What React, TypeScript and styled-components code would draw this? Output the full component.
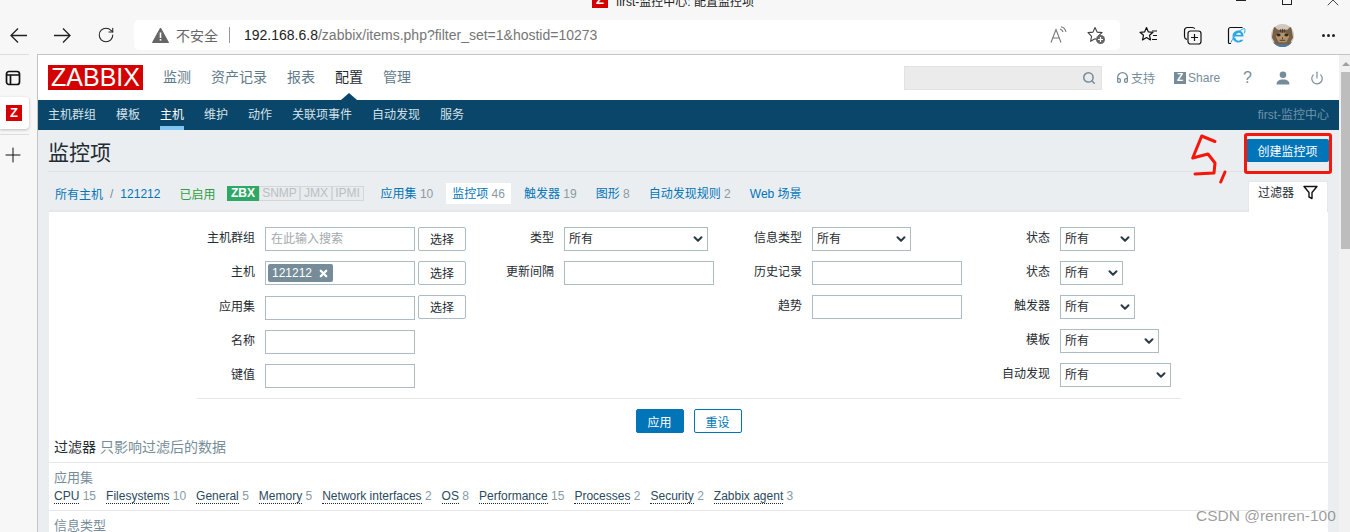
import { FC, ReactNode } from 'react';
import styled, { createGlobalStyle } from 'styled-components';
import { ChevronDown, Headphones, Plus, Power, RotateCw, Search, X } from 'lucide-react';

const FONT = `"Liberation Sans", "Noto Sans CJK SC", sans-serif`;

const palette = {
    link: '#0275b8',
    text: '#1f2c33',
    gray: '#768d99',
    count: '#8a9aa5',
    navy: '#0a466a',
    page: '#ebeef0',
    line: '#e4e7e9',
    border: '#acbbc4',
};

const GlobalStyle = createGlobalStyle`
    html, body {
        margin: 0;
        padding: 0;
        overflow: hidden;
    }
    body {
        font-family: ${FONT};
        font-size: 12px;
        color: ${palette.text};
    }
`;

const subMenu = ['主机群组', '模板', '主机', '维护', '动作', '关联项事件', '自动发现', '服务'];
const topMenu = ['监测', '资产记录', '报表', '配置', '管理'];
const apps: [string, number][] = [
    ['CPU', 15],
    ['Filesystems', 10],
    ['General', 5],
    ['Memory', 5],
    ['Network interfaces', 2],
    ['OS', 8],
    ['Performance', 15],
    ['Processes', 2],
    ['Security', 2],
    ['Zabbix agent', 3],
];

const Field: FC<{ label: string; labelWidth: number; tall?: boolean; children: ReactNode }> = ({ label, labelWidth, tall, children }) => (
    <FieldRow $labelWidth={labelWidth} $tall={tall}>
        <FieldLabel>{label}</FieldLabel>
        <Control>{children}</Control>
    </FieldRow>
);

const AllSelect: FC<{ width: number }> = ({ width }) => (
    <SelectWrap $width={width}>
        <SelectBox defaultValue="all">
            <option value="all">所有</option>
        </SelectBox>
        <SelectArrow>
            <ChevronDown size={14} strokeWidth={3.4} />
        </SelectArrow>
    </SelectWrap>
);

const App: FC = () => {
    return (
        <Window>
            <GlobalStyle />
            <TitleBar>
                <TitleInner>
                    <TitleIcon>Z</TitleIcon>
                    <span>first-监控中心: 配置监控项</span>
                </TitleInner>
                <WindowButtons>
                    <MinLine />
                    <MaxBox />
                    <CloseMark>
                        <X size={20} strokeWidth={1} />
                    </CloseMark>
                </WindowButtons>
            </TitleBar>

            <Toolbar>
                <IconSlot>
                    <svg width="19" height="19" viewBox="0 0 19 19" fill="none" stroke="#222" strokeWidth="1.3">
                        <path d="M2 9.5h16M9 2.5l-7 7 7 7" />
                    </svg>
                </IconSlot>
                <IconSlot>
                    <svg width="19" height="19" viewBox="0 0 19 19" fill="none" stroke="#222" strokeWidth="1.3">
                        <path d="M1 9.5h16M10 2.5l7 7-7 7" />
                    </svg>
                </IconSlot>
                <IconSlot>
                    <RotateCw size={18} strokeWidth={1.4} color="#222" />
                </IconSlot>
                <AddressBar>
                    <svg width="17" height="16" viewBox="0 0 17 16">
                        <path d="M8.5 1L16.5 15.5H.5z" fill="#666" stroke="#666" strokeLinejoin="round" />
                        <rect x="7.7" y="5.5" width="1.6" height="5.5" fill="#fff" />
                        <rect x="7.7" y="12" width="1.6" height="1.6" fill="#fff" />
                    </svg>
                    <Insecure>不安全</Insecure>
                    <AddressDivider />
                    <Url>
                        192.168.6.8<UrlPath>/zabbix/items.php?filter_set=1&amp;hostid=10273</UrlPath>
                    </Url>
                    <AddressTools>
                        <svg width="18" height="18" viewBox="0 0 18 18" fill="none" stroke="#777" strokeWidth="1.1">
                            <path d="M1 16.500L6 3.500l5 13M2.800 12h6.400" />
                            <path d="M10 3c1.500.4 2.600 1.500 3 3M11 .8c2.600.6 4.300 2.400 5 5" />
                        </svg>
                        <svg width="19" height="19" viewBox="0 0 19 19">
                            <path d="M8 1.500l2.100 4.600 5 .5-3.700 3.300 1 4.900L8 12.800l-4.400 2.500 1-4.900L1 6.600l5-.5z" fill="none" stroke="#444" strokeWidth="1.1" strokeLinejoin="round" />
                            <circle cx="13.500" cy="13.500" r="4.500" fill="#666" />
                            <path d="M13.500 11v5M11 13.500h5" stroke="#fff" strokeWidth="1.2" />
                        </svg>
                    </AddressTools>
                </AddressBar>
                <IconSlot>
                    <svg width="19" height="19" viewBox="0 0 19 19" fill="none" stroke="#111" strokeWidth="1.2" strokeLinejoin="round">
                        <path d="M7.500 1.500l1.900 4.400 4.600.4-3.500 3 1 4.600-4-2.400-4 2.400 1-4.600L1 6.300l4.600-.4z" />
                        <path d="M13 5h5M14 9.500h4M13 13.500h5" />
                    </svg>
                </IconSlot>
                <IconSlot>
                    <svg width="19" height="19" viewBox="0 0 19 19" fill="none" stroke="#111" strokeWidth="1.2">
                        <path d="M4 13.500C2.500 13 1.500 12 1.500 10.500V4.500c0-1.700 1.300-3 3-3h5c1 0 1.800.5 2.300 1.300" />
                        <rect x="5" y="5" width="13" height="13" rx="2.500" />
                        <path d="M11.500 8v7M8 11.500h7" />
                    </svg>
                </IconSlot>
                <IconSlot>
                    <svg width="19" height="19" viewBox="0 0 19 19" fill="none">
                        <path d="M4 17.500H2.500c-.6 0-1-.4-1-1v-13c0-1.100.9-2 2-2h12" stroke="#111" strokeWidth="1.200" />
                        <path d="M6 10.500h10.500C16.500 7 14.500 4.500 11.500 4.500 8 4.500 5.500 7 5.500 10.500s2.500 6 6 6c2.200 0 3.800-1 4.800-2.800h-2.800c-.5.700-1.200 1-2 1-1.600 0-2.700-1-2.900-2.400" fill="#2aa7e8" />
                        <path d="M8.800 8.800c.2-1.200 1.300-2.100 2.700-2.100s2.400.9 2.600 2.100z" fill="#fff" />
                        <path d="M4 16.500C7 9 13 3.500 17.500 2.500c.8 1.200.5 3-.5 5" stroke="#2aa7e8" strokeWidth="1" />
                    </svg>
                </IconSlot>
                <AvatarSlot>
                    <svg width="23" height="23" viewBox="0 0 24 24">
                        <clipPath id="avatar-clip">
                            <circle cx="12" cy="12" r="12" />
                        </clipPath>
                        <g clipPath="url(#avatar-clip)">
                            <rect width="24" height="24" fill="#cfc9c0" />
                            <rect y="19" width="24" height="5" fill="#4f77a3" />
                            <path d="M3 2l4 4h10l4-4 2 12-4 7H5l-4-7z" fill="#7a5f45" />
                            <path d="M8 9h8l3 4-3 6H8l-3-6z" fill="#b0946e" />
                            <ellipse cx="8" cy="11.500" rx="2" ry="1.500" fill="#2e2a22" />
                            <ellipse cx="16" cy="11.500" rx="2" ry="1.500" fill="#2e2a22" />
                            <path d="M12 14v2M9 17h6" stroke="#4d3a28" strokeWidth="1" />
                            <path d="M10 5.500v3M12 5V9M14 5.500v3" stroke="#3d2d1f" strokeWidth=".8" />
                        </g>
                    </svg>
                </AvatarSlot>
                <DotsSlot>
                    <Dot />
                    <Dot />
                    <Dot />
                </DotsSlot>
            </Toolbar>

            <Body>
                <Sidebar>
                    <SideRule />
                    <SideIcon>
                        <svg width="16" height="16" viewBox="0 0 16 16" fill="none" stroke="#111" strokeWidth="1.700">
                            <rect x="1.500" y="1.500" width="13" height="13" rx="2.500" />
                            <path d="M1.500 5h13M5.500 5v9.500" />
                        </svg>
                    </SideIcon>
                    <SideTab>
                        <SideFavicon>Z</SideFavicon>
                    </SideTab>
                    <SideRule $offset={5} />
                    <AddTabIcon>
                        <Plus size={24} strokeWidth={1} color="#111" />
                    </AddTabIcon>
                </Sidebar>

                <Main>
                    <Header>
                        <Logo>ZABBIX</Logo>
                        <TopNav>
                            {topMenu.map(item => (
                                <TopItem key={item} $active={item === '配置'}>
                                    {item}
                                </TopItem>
                            ))}
                        </TopNav>
                        <HeaderTools>
                            <SearchBox>
                                <Search size={14} strokeWidth={2.6} color={palette.gray} />
                            </SearchBox>
                            <HeaderLink $gap={16}>
                                <Headphones size={13} strokeWidth={2.4} />
                                支持
                            </HeaderLink>
                            <HeaderLink $gap={19}>
                                <ShareBox>Z</ShareBox>
                                Share
                            </HeaderLink>
                            <HelpMark>?</HelpMark>
                            <HeaderLink $gap={24}>
                                <svg width="14" height="14" viewBox="0 0 14 14" fill={palette.gray}>
                                    <circle cx="7" cy="3.800" r="3.300" />
                                    <path d="M0.500 13.500c0-3 2-5 6.500-5s6.500 2 6.500 5z" />
                                </svg>
                            </HeaderLink>
                            <HeaderLink $gap={20}>
                                <Power size={14} strokeWidth={2} />
                            </HeaderLink>
                        </HeaderTools>
                    </Header>

                    <SubNav>
                        {subMenu.map(item => (
                            <SubItem key={item} $active={item === '主机'}>
                                {item}
                            </SubItem>
                        ))}
                        <ServerName>first-监控中心</ServerName>
                    </SubNav>

                    <PageHead>
                        <PageTitle>监控项</PageTitle>
                        <CreateButton>创建监控项</CreateButton>
                    </PageHead>

                    <Content>
                        <TabsRow>
                            <Crumbs>
                                <Link>所有主机</Link>
                                <Slash>/</Slash>
                                <Link>121212</Link>
                                <Enabled>已启用</Enabled>
                                <Availability>
                                    <Avail $on>ZBX</Avail>
                                    <Avail>SNMP</Avail>
                                    <Avail>JMX</Avail>
                                    <Avail>IPMI</Avail>
                                </Availability>
                                <HostTabs>
                                    <HostTab>
                                        <Link>应用集</Link> <Count>10</Count>
                                    </HostTab>
                                    <HostTab $active>
                                        <Link>监控项</Link> <Count>46</Count>
                                    </HostTab>
                                    <HostTab>
                                        <Link>触发器</Link> <Count>19</Count>
                                    </HostTab>
                                    <HostTab>
                                        <Link>图形</Link> <Count>8</Count>
                                    </HostTab>
                                    <HostTab>
                                        <Link>自动发现规则</Link> <Count>2</Count>
                                    </HostTab>
                                    <HostTab>
                                        <Link>Web 场景</Link>
                                    </HostTab>
                                </HostTabs>
                            </Crumbs>
                            <FilterTab>
                                过滤器
                                <svg width="15" height="15" viewBox="0 0 15 15" fill="none" stroke="#111" strokeWidth="1.400" strokeLinejoin="round">
                                    <path d="M1 1.500h13L9 7.500v6l-3-1.500V7.500z" />
                                </svg>
                            </FilterTab>
                        </TabsRow>

                        <FilterPanel>
                            <FormGrid>
                                <FormColumn>
                                    <Field label="主机群组" labelWidth={58}>
                                        <TextInput $width={150} placeholder="在此输入搜索" />
                                        <PickButton>选择</PickButton>
                                    </Field>
                                    <Field label="主机" labelWidth={58} tall>
                                        <ChipInput>
                                            <Chip>
                                                121212
                                                <X size={11} strokeWidth={5} />
                                            </Chip>
                                        </ChipInput>
                                        <PickButton>选择</PickButton>
                                    </Field>
                                    <Field label="应用集" labelWidth={58}>
                                        <TextInput $width={150} />
                                        <PickButton $raised>选择</PickButton>
                                    </Field>
                                    <Field label="名称" labelWidth={58}>
                                        <TextInput $width={150} />
                                    </Field>
                                    <Field label="键值" labelWidth={58}>
                                        <TextInput $width={150} />
                                    </Field>
                                </FormColumn>
                                <FormColumn>
                                    <Field label="类型" labelWidth={70}>
                                        <AllSelect width={144} />
                                    </Field>
                                    <Field label="更新间隔" labelWidth={70}>
                                        <TextInput $width={150} />
                                    </Field>
                                </FormColumn>
                                <FormColumn>
                                    <Field label="信息类型" labelWidth={78}>
                                        <AllSelect width={99} />
                                    </Field>
                                    <Field label="历史记录" labelWidth={78}>
                                        <TextInput $width={150} />
                                    </Field>
                                    <Field label="趋势" labelWidth={78}>
                                        <TextInput $width={150} />
                                    </Field>
                                </FormColumn>
                                <FormColumn>
                                    <Field label="状态" labelWidth={78}>
                                        <AllSelect width={75} />
                                    </Field>
                                    <Field label="状态" labelWidth={78}>
                                        <AllSelect width={63} />
                                    </Field>
                                    <Field label="触发器" labelWidth={78}>
                                        <AllSelect width={75} />
                                    </Field>
                                    <Field label="模板" labelWidth={78}>
                                        <AllSelect width={99} />
                                    </Field>
                                    <Field label="自动发现" labelWidth={78}>
                                        <AllSelect width={111} />
                                    </Field>
                                </FormColumn>
                            </FormGrid>
                            <FormActions>
                                <ApplyButton>应用</ApplyButton>
                                <ResetButton>重设</ResetButton>
                            </FormActions>
                            <FilterNote>
                                过滤器 <NoteGray>只影响过滤后的数据</NoteGray>
                            </FilterNote>
                            <Subfilter>
                                <SubfilterTitle>应用集</SubfilterTitle>
                                <TagList>
                                    {apps.map(([name, count]) => (
                                        <TagItem key={name}>
                                            <TagName>{name}</TagName> <Count>{count}</Count>
                                        </TagItem>
                                    ))}
                                </TagList>
                            </Subfilter>
                            <Subfilter>
                                <SubfilterTitle>信息类型</SubfilterTitle>
                            </Subfilter>
                        </FilterPanel>
                    </Content>
                </Main>

                <ScrollBar>
                    <ScrollArrow />
                    <ScrollThumb />
                </ScrollBar>
            </Body>

            <RedFrame />
            <Scribble width="44" height="54" viewBox="0 0 44 54" fill="none" stroke="#f5160c" strokeWidth="3" strokeLinecap="round" strokeLinejoin="round">
                <path d="M13.700 5l13.300 5.500M13.700 5L4.700 27l15.300-4 7 9-1 10-19 1" />
                <path d="M37 41l-4.300 10" />
            </Scribble>
            <Watermark>CSDN @renren-100</Watermark>
        </Window>
    );
};

const Window = styled.div`
    position: relative;
    width: 1350px;
    height: 532px;
    overflow: hidden;
    background-color: #f7f7f7;
    display: flex;
    flex-direction: column;
`;

const TitleBar = styled.div`
    height: 20px;
    flex: none;
    overflow: hidden;
    display: flex;
`;

const TitleInner = styled.div`
    height: 16px;
    margin: -8px 0 0 592px;
    display: flex;
    align-items: center;
    gap: 8px;
    font-size: 12px;
    color: #222;
`;

const TitleIcon = styled.span`
    width: 16px;
    height: 16px;
    background-color: #d40000;
    color: #fff;
    font-weight: bold;
    font-size: 13px;
    text-align: center;
    line-height: 16px;
`;

const WindowButtons = styled.div`
    margin-left: auto;
    display: flex;
    align-items: flex-start;
    padding-right: 7px;
`;

const MinLine = styled.div`
    width: 10px;
    height: 1px;
    background-color: #222;
`;

const MaxBox = styled.div`
    width: 10px;
    height: 5px;
    box-sizing: border-box;
    margin: 0 31px 0 36px;
    border: 1px solid #222;
    border-top: none;
`;

const CloseMark = styled.div`
    margin-top: -10px;
    color: #222;
`;

const Toolbar = styled.div`
    height: 34px;
    flex: none;
    display: flex;
    align-items: flex-start;
    gap: 8px;
`;

const IconSlot = styled.div`
    width: 36px;
    height: 30px;
    flex: none;
    display: flex;
    align-items: center;
    justify-content: center;
`;

const AvatarSlot = styled(IconSlot)`
    margin-left: 2px;
`;

const DotsSlot = styled(IconSlot)`
    gap: 2px;
    margin-left: 2px;
`;

const Dot = styled.span`
    width: 3px;
    height: 3px;
    border-radius: 50%;
    background-color: #222;
`;

const AddressBar = styled.div`
    width: 986px;
    height: 30px;
    margin: 0 2px;
    padding: 0 14px 0 18px;
    box-sizing: border-box;
    flex: none;
    display: flex;
    align-items: center;
    background-color: #fff;
    border-radius: 5px;
`;

const Insecure = styled.span`
    margin-left: 7px;
    font-size: 14px;
    color: #666;
`;

const AddressDivider = styled.span`
    width: 1px;
    height: 16px;
    margin: 0 14px 0 11px;
    background-color: #999;
`;

const Url = styled.span`
    font-size: 14px;
    color: #222;
`;

const UrlPath = styled.span`
    color: #767676;
`;

const AddressTools = styled.div`
    margin-left: auto;
    display: flex;
    align-items: center;
    gap: 19px;
`;

const Body = styled.div`
    flex: 1;
    min-height: 0;
    display: flex;
`;

const Sidebar = styled.div`
    width: 37px;
    flex: none;
    display: flex;
    flex-direction: column;
    align-items: flex-start;
`;

const SideIcon = styled.div`
    width: 26px;
    height: 42px;
    box-sizing: border-box;
    padding-top: 4px;
    display: flex;
    align-items: center;
    justify-content: center;
`;

const AddTabIcon = styled(SideIcon)`
    padding: 0 0 2px;
`;

const SideRule = styled.div<{ $offset?: number }>`
    width: 29px;
    height: 1px;
    flex: none;
    margin-top: ${p => p.$offset ?? 0}px;
    background-color: #dcdcdc;
`;

const SideTab = styled.div`
    width: 29px;
    height: 32px;
    padding-left: 6px;
    box-sizing: border-box;
    display: flex;
    align-items: center;
    background-color: #fff;
    border-radius: 0 4px 4px 0;
    box-shadow: 0 1px 3px rgba(0, 0, 0, 0.25);
`;

const SideFavicon = styled.span`
    width: 16px;
    height: 16px;
    background-color: #d40000;
    color: #fff;
    font-size: 13px;
    font-weight: bold;
    line-height: 16px;
    text-align: center;
`;

const Main = styled.div`
    flex: 1;
    min-width: 0;
    display: flex;
    flex-direction: column;
    background-color: ${palette.page};
    border-top: 1px solid #c4c4c4;
    border-left: 1px solid #c4c4c4;
`;

const Header = styled.div`
    height: 45px;
    flex: none;
    display: flex;
    align-items: center;
    padding: 0 15px 0 10px;
    background-color: #fff;
`;

const Logo = styled.div`
    width: 95px;
    height: 25px;
    background-color: #d40000;
    color: #fff;
    font-size: 25px;
    line-height: 25px;
    text-align: center;
    flex: none;
`;

const TopNav = styled.div`
    display: flex;
    gap: 20px;
    margin: 0 0 3px 20px;
`;

const TopItem = styled.div<{ $active?: boolean }>`
    position: relative;
    font-size: 14px;
    color: ${p => (p.$active ? palette.text : '#5f7a8a')};

    ${p =>
        p.$active &&
        `&::after {
            content: '';
            position: absolute;
            left: 6px;
            bottom: -14px;
            border-left: 8px solid transparent;
            border-right: 8px solid transparent;
            border-bottom: 7px solid ${palette.navy};
        }`}
`;

const HeaderTools = styled.div`
    margin-left: auto;
    display: flex;
    align-items: center;
`;

const SearchBox = styled.div`
    width: 198px;
    height: 24px;
    margin-right: -2px;
    box-sizing: border-box;
    padding-right: 5px;
    display: flex;
    align-items: center;
    justify-content: flex-end;
    background-color: #ebebeb;
    border: 1px solid #e2e2e2;
`;

const HeaderLink = styled.div<{ $gap: number }>`
    margin-left: ${p => p.$gap}px;
    display: flex;
    align-items: center;
    gap: 2px;
    color: ${palette.gray};
`;

const ShareBox = styled.span`
    width: 12px;
    height: 12px;
    background-color: ${palette.gray};
    color: #fff;
    font-size: 10px;
    font-weight: bold;
    line-height: 12px;
    text-align: center;
`;

const HelpMark = styled.span`
    margin-left: 23px;
    font-size: 16px;
    color: ${palette.gray};
`;

const SubNav = styled.div`
    height: 30px;
    flex: none;
    display: flex;
    align-items: stretch;
    gap: 20px;
    padding: 0 10px;
    background-color: ${palette.navy};
`;

const SubItem = styled.div<{ $active?: boolean }>`
    line-height: 30px;
    color: ${p => (p.$active ? '#fff' : '#d4e1e8')};
    box-shadow: ${p => (p.$active ? 'inset 0 -4px 0 #7fc6f0' : 'none')};
`;

const ServerName = styled.div`
    margin-left: auto;
    line-height: 30px;
    color: #6d93a8;
`;

const PageHead = styled.div`
    height: 42px;
    box-sizing: border-box;
    flex: none;
    margin: 0 10px;
    display: flex;
    align-items: center;
    justify-content: space-between;
    border-bottom: 1px solid #dfe3e6;
`;

const PageTitle = styled.h1`
    margin: 0;
    font-size: 21px;
    font-weight: normal;
    color: ${palette.text};
`;

const CreateButton = styled.button`
    width: 83px;
    height: 23px;
    padding: 0;
    border: none;
    border-radius: 2px;
    background-color: ${palette.link};
    color: #fff;
    font: 12px ${FONT};
`;

const Content = styled.div`
    flex: 1;
    padding: 0 11px;
`;

const TabsRow = styled.div`
    height: 38px;
    display: flex;
    justify-content: space-between;
    align-items: flex-end;
`;

const Crumbs = styled.div`
    height: 100%;
    box-sizing: border-box;
    padding: 5px 0 0 6px;
    display: flex;
    align-items: center;
`;

const Link = styled.span`
    color: ${palette.link};
`;

const Slash = styled.span`
    margin: 0 7px;
    color: ${palette.gray};
`;

const Enabled = styled.span`
    margin: 0 12px 0 19px;
    color: #2f9e3f;
`;

const Availability = styled.div`
    display: flex;
`;

const Avail = styled.span<{ $on?: boolean }>`
    height: 15px;
    padding: 0 3.6px;
    line-height: 15px;
    font-weight: ${p => (p.$on ? 'bold' : 'normal')};
    color: ${p => (p.$on ? '#fff' : '#b7c0c6')};
    background-color: ${p => (p.$on ? '#2fa866' : '#e9ebec')};
    box-shadow: ${p => (p.$on ? 'none' : 'inset 0 0 0 1px #d3d7da')};
`;

const HostTabs = styled.div`
    display: flex;
    gap: 7px;
    margin-left: 11px;
`;

const HostTab = styled.div<{ $active?: boolean }>`
    height: 21px;
    padding: 0 6px;
    line-height: 22px;
    background-color: ${p => (p.$active ? '#fff' : 'transparent')};
`;

const Count = styled.span`
    color: ${palette.count};
`;

const FilterTab = styled.div`
    position: relative;
    z-index: 1;
    width: 80px;
    height: 31px;
    margin-bottom: -2px;
    box-sizing: border-box;
    padding: 3px 9px 0;
    display: flex;
    align-items: flex-start;
    justify-content: space-between;
    line-height: 16px;
    background-color: #fff;
    border: 1px solid #e4e8eb;
    border-bottom: none;
    color: ${palette.text};
`;

const FilterPanel = styled.div`
    background-color: #fff;
    border-top: 2px solid #e4e8eb;
    padding-top: 15px;
`;

const FormGrid = styled.div`
    display: grid;
    grid-template-columns: 287px 240px 248px 209px;
    width: 984px;
    margin-left: 148px;
    padding-bottom: 10px;
    border-bottom: 1px solid ${palette.line};
`;

const FormColumn = styled.div`
    display: flex;
    flex-direction: column;
    gap: 10px;
`;

const FieldRow = styled.div<{ $labelWidth: number; $tall?: boolean }>`
    height: ${p => (p.$tall ? 25 : 24)}px;
    display: grid;
    grid-template-columns: ${p => p.$labelWidth}px auto;
    justify-content: start;
    align-items: start;
    gap: 10px;
`;

const FieldLabel = styled.label`
    line-height: 23px;
    text-align: right;
    color: ${palette.text};
`;

const Control = styled.div`
    display: flex;
    gap: 3px;
`;

const TextInput = styled.input<{ $width: number }>`
    width: ${p => p.$width}px;
    height: 24px;
    box-sizing: border-box;
    padding: 0 5px;
    border: 1px solid ${palette.border};
    border-radius: 0;
    font: 12px ${FONT};
    outline: none;

    &::placeholder {
        color: #a3a9ad;
    }
`;

const ChipInput = styled.div`
    width: 150px;
    height: 24px;
    box-sizing: border-box;
    padding: 2px;
    border: 1px solid ${palette.border};
`;

const Chip = styled.span`
    width: 65px;
    height: 18px;
    box-sizing: border-box;
    padding: 0 4px;
    display: flex;
    align-items: center;
    justify-content: space-between;
    background-color: ${palette.gray};
    border-radius: 2px;
    color: #fff;
`;

const PickButton = styled.button<{ $raised?: boolean }>`
    width: 48px;
    height: 24px;
    margin-top: ${p => (p.$raised ? -1 : 0)}px;
    padding: 0 0 2px;
    background-color: #fff;
    border: 1px solid ${palette.border};
    border-radius: 2px;
    color: ${palette.text};
    font: 12px ${FONT};
`;

const SelectWrap = styled.div<{ $width: number }>`
    position: relative;
    width: ${p => p.$width}px;
    height: 24px;
`;

const SelectBox = styled.select`
    width: 100%;
    height: 100%;
    box-sizing: border-box;
    padding: 0 0 0 4px;
    appearance: none;
    background-color: #fff;
    border: 1px solid ${palette.border};
    border-radius: 0;
    color: ${palette.text};
    font: 12px ${FONT};
    outline: none;
`;

const SelectArrow = styled.span`
    position: absolute;
    right: 3px;
    top: 5px;
    height: 14px;
    color: #2b3a44;
    pointer-events: none;
`;

const FormActions = styled.div`
    display: flex;
    justify-content: center;
    gap: 10px;
    padding-top: 10px;
`;

const ApplyButton = styled.button`
    width: 48px;
    height: 24px;
    padding: 0;
    background-color: ${palette.link};
    border: 1px solid ${palette.link};
    border-radius: 2px;
    color: #fff;
    font: 12px ${FONT};
`;

const ResetButton = styled(ApplyButton)`
    background-color: #fff;
    color: ${palette.link};
`;

const FilterNote = styled.div`
    height: 29px;
    padding-left: 5px;
    line-height: 28px;
    font-size: 14px;
    color: ${palette.text};
`;

const NoteGray = styled.span`
    color: ${palette.gray};
`;

const Subfilter = styled.div`
    padding: 7px 5px 7px;
    border-top: 1px solid ${palette.line};
`;

const SubfilterTitle = styled.div`
    font-size: 13px;
    line-height: 15px;
    color: ${palette.gray};
`;

const TagList = styled.div`
    display: flex;
    gap: 10px;
    margin-top: 4px;
    line-height: 14px;
`;

const TagItem = styled.span`
    white-space: nowrap;
`;

const TagName = styled.span`
    color: #2b4a5e;
    border-bottom: 1px dotted #1f2c33;
`;

const ScrollBar = styled.div`
    width: 11px;
    flex: none;
    padding-left: 2px;
    box-sizing: border-box;
    background-color: #f1f1f1;
    border-top: 1px solid #c4c4c4;
    display: flex;
    flex-direction: column;
`;

const ScrollArrow = styled.div`
    height: 17px;
    flex: none;
    display: flex;
    justify-content: center;
    align-items: center;

    &::before {
        content: '';
        border-left: 4px solid transparent;
        border-right: 4px solid transparent;
        border-bottom: 4px solid #a0a0a0;
    }
`;

const ScrollThumb = styled.div`
    height: 177px;
    flex: none;
    background-color: #bdbdbd;
`;

const RedFrame = styled.div`
    position: absolute;
    left: 1244px;
    top: 133px;
    width: 88px;
    height: 41px;
    box-sizing: border-box;
    border: 3px solid #f5160c;
    border-radius: 3px;
`;

const Scribble = styled.svg`
    position: absolute;
    left: 1188px;
    top: 131px;
`;

const Watermark = styled.div`
    position: absolute;
    left: 1196px;
    top: 507px;
    font-size: 15.5px;
    line-height: 18px;
    color: rgba(90, 90, 90, 0.6);
`;

export default App;
